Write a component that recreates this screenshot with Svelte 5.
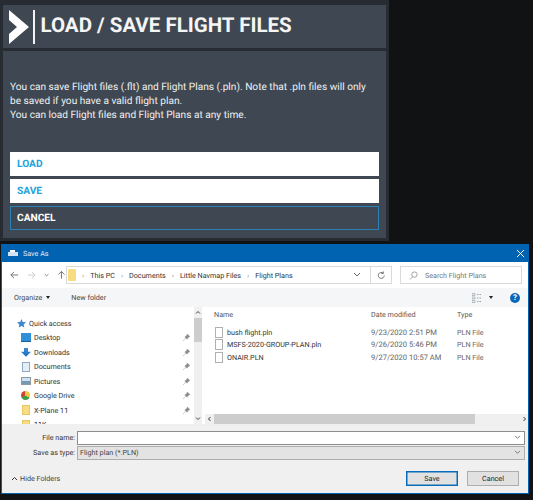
<script>
  const side = [
    { n: 'Desktop', c: 'desk' },
    { n: 'Downloads', c: 'down' },
    { n: 'Documents', c: 'docs' },
    { n: 'Pictures', c: 'pics' },
    { n: 'Google Drive', c: 'drive' },
    { n: 'X-Plane 11', c: 'folder' }
  ];
  const files = [
    { n: 'bush flight.pln', d: '9/23/2020 2:51 PM' },
    { n: 'MSFS-2020-GROUP-PLAN.pln', d: '9/26/2020 5:46 PM' },
    { n: 'ONAIR.PLN', d: '9/27/2020 10:57 AM' }
  ];
</script>

<div class="page">
  <section class="game">
    <header class="head">
      <svg class="chev" width="21" height="34" viewBox="0 0 21 34"><path d="M0 0 L20 17 L0 34 L0 24 L8 17 L0 10Z" fill="#fff" /></svg>
      <span class="rule"></span>
      <h1>LOAD / SAVE FLIGHT FILES</h1>
    </header>
    <div class="body">
      <p>You can save Flight files (.flt) and Flight Plans (.pln). Note that .pln files will only<br />be saved if you have a valid flight plan.<br />You can load Flight files and Flight Plans at any time.</p>
      <div class="btns">
        <div class="btn light">LOAD</div>
        <div class="btn light">SAVE</div>
        <div class="btn dark">CANCEL</div>
      </div>
    </div>
  </section>

  <section class="dlg">
    <div class="title">
      <svg width="10" height="8" viewBox="0 0 10 8"><path d="M0 3h10v4H0z" fill="#cfe3f5" /><path d="M2 1h5v2H2z" fill="#fff" /></svg>
      <span>Save As</span>
      <svg class="x" width="9" height="9" viewBox="0 0 9 9"><path d="M1 1l7 7M8 1l-7 7" stroke="#fff" stroke-width="1" /></svg>
    </div>
    <div class="addr">
      <div class="nav">
        <svg width="10" height="10" viewBox="0 0 10 10"><path d="M9 5H1M4.500 1.500L1 5l3.500 3.500" fill="none" stroke="#666" /></svg>
        <svg width="10" height="10" viewBox="0 0 10 10"><path d="M1 5h8M5.500 1.500L9 5 5.500 8.500" fill="none" stroke="#c9c9c9" /></svg>
        <svg width="6" height="6" viewBox="0 0 6 6"><path d="M1 2l2 2 2-2" fill="none" stroke="#777" /></svg>
        <svg width="10" height="10" viewBox="0 0 10 10"><path d="M5 9V1M1.500 4.500L5 1l3.500 3.500" fill="none" stroke="#666" /></svg>
      </div>
      <div class="path">
        <span class="fold"></span>
        <span class="crumb">›</span><span>This PC</span>
        <span class="crumb">›</span><span>Documents</span>
        <span class="crumb">›</span><span>Little Navmap Files</span>
        <span class="crumb">›</span><span>Flight Plans</span>
        <svg class="pdrop" width="8" height="6" viewBox="0 0 8 6"><path d="M1 1l3 3 3-3" fill="none" stroke="#666" /></svg>
        <span class="psep"></span>
        <svg class="refresh" width="9" height="9" viewBox="0 0 10 10"><path d="M8 5a3.300 3.300 0 1 1-1.200-2.600M7 .5v2.200H4.800" fill="none" stroke="#666" /></svg>
      </div>
      <div class="search">
        <svg width="9" height="9" viewBox="0 0 10 10"><circle cx="6" cy="4" r="3" fill="none" stroke="#999" /><path d="M4 6.500L1 9.500" stroke="#999" /></svg>
        <span>Search Flight Plans</span>
      </div>
    </div>
    <div class="tools">
      <span>Organize</span><span class="tri"></span>
      <span class="newf">New folder</span>
      <svg class="view" width="11" height="10" viewBox="0 0 11 10"><path d="M0 .5h3v2H0zM0 4h3v2H0zM0 7.500h3v2H0z" fill="none" stroke="#9aa3ad" stroke-width=".7" /><path d="M5 1.500h5M5 5h5M5 8.500h5" stroke="#9aa3ad" stroke-dasharray="1.500 1" /></svg>
      <span class="tri vt"></span>
      <span class="help">?</span>
    </div>
    <div class="main">
      <nav class="tree">
        <div class="list">
          <div class="row qa">
            <svg width="9" height="9" viewBox="0 0 10 10"><path d="M5 0l1.500 3.300 3.500.4-2.600 2.300.7 3.500L5 7.700 1.900 9.500l.7-3.500L0 3.700l3.500-.4z" fill="#3c8ad0" /></svg>
            <span>Quick access</span>
          </div>
          {#each side as s}
            <div class="row">
              <span class="ic {s.c}"></span>
              <span class="lbl">{s.n}</span>
              <svg class="pin" width="7" height="7" viewBox="0 0 8 8"><path d="M5 0l3 3-1.500.5L5 5.500 4.500 6 2 3.500 2.500 3l2-1.500zM3 5L0 8" fill="#8b8b8b" stroke="#8b8b8b" stroke-width=".5" /></svg>
            </div>
          {/each}
          <div class="row"><span class="ic folder"></span><span class="lbl">11K</span></div>
        </div>
        <div class="vbar">
          <svg width="6" height="5" viewBox="0 0 6 5"><path d="M1 3.500L3 1.500l2 2" fill="none" stroke="#444" /></svg>
          <span class="thumb"></span>
          <svg class="vdown" width="6" height="5" viewBox="0 0 6 5"><path d="M1 1.500L3 3.500l2-2" fill="none" stroke="#444" /></svg>
        </div>
      </nav>
      <div class="files">
        <div class="cols">
          <span class="c1">Name</span><span class="c2">Date modified</span><span class="c3">Type</span>
        </div>
        <div class="rows">
          {#each files as f}
            <div class="frow">
              <span class="c1 fname"><span class="doc"></span>{f.n}</span>
              <span class="c2 date">{f.d}</span>
              <span class="c3">PLN File</span>
            </div>
          {/each}
        </div>
        <div class="hbar">
          <svg width="5" height="6" viewBox="0 0 5 6"><path d="M3.500 1L1.500 3l2 2" fill="none" stroke="#333" /></svg>
          <span class="hthumb"></span>
          <svg width="5" height="6" viewBox="0 0 5 6"><path d="M1.500 1l2 2-2 2" fill="none" stroke="#333" /></svg>
        </div>
      </div>
    </div>
    <div class="foot">
      <div class="field"><label for="fn">File name:</label><div id="fn" class="inp">
        <svg width="7" height="5" viewBox="0 0 8 6"><path d="M1 1l3 3 3-3" fill="none" stroke="#666" /></svg></div></div>
      <div class="field"><label for="ft">Save as type:</label><div id="ft" class="inp sel"><span>Flight plan (*.PLN)</span>
        <svg width="7" height="5" viewBox="0 0 8 6"><path d="M1 1l3 3 3-3" fill="none" stroke="#666" /></svg></div></div>
      <div class="actions">
        <div class="hide">
          <svg width="7" height="5" viewBox="0 0 7 5"><path d="M1 4l2.500-2.500L6 4" fill="none" stroke="#333" /></svg>
          <span>Hide Folders</span>
        </div>
        <div class="wbtn def">Save</div>
        <div class="wbtn">Cancel</div>
      </div>
    </div>
  </section>
</div>

<style>
  :global(body) { margin: 0; background: #111214; text-rendering: geometricPrecision; }
  .page { width: 533px; height: 500px; overflow: hidden; background: #111214; box-sizing: border-box; }
  .game { width: 389px; height: 241px; background: #262c32; padding: 5px 3px 3px 3px; box-sizing: border-box; display: flex; flex-direction: column; gap: 3px; font-family: Roboto, sans-serif; color: #fff; }
  .head { height: 43px; background: #3f4852; display: flex; align-items: center; flex: none; padding-left: 6px; }
  .chev { flex: none; }
  .rule { width: 1.500px; height: 34px; background: #f2f2f2; margin-left: 3px; }
  h1 { margin: 0 0 0 6px; font-size: 20.500px; font-weight: 700; line-height: 1; color: #f5f5f5; white-space: nowrap; }
  .body { flex: 1; background: #3f4852; padding: 0 7px; display: flex; flex-direction: column; }
  p { margin: 30px 0 0 0; font-size: 10.150px; line-height: 14px; color: #f0f0f0; height: 71px; white-space: nowrap; }
  .btns { display: flex; flex-direction: column; gap: 3px; }
  .btn { height: 24px; font-size: 10.200px; font-weight: 700; line-height: 24px; padding: 1px 0 0 7px; box-sizing: border-box; }
  .light { background: #fff; color: #22a3dc; }
  .dark { background: #3f4852; color: #fff; border: 1px solid #2a82b4; line-height: 22px; padding-left: 6px; }

  .dlg { width: 528px; height: 250px; margin: 3px 0 0 1px; background: #fff; display: flex; flex-direction: column; font-family: Roboto, sans-serif; font-size: 7.200px; color: #444; box-sizing: border-box; border: 1px solid #0063b1; border-top: 0; white-space: nowrap; }
  .title { height: 18px; background: #0063b1; color: #e4eef7; display: flex; align-items: center; gap: 5px; padding-left: 6px; flex: none; }
  .x { margin-left: auto; margin-right: 3px; }
  .addr { height: 26px; flex: none; display: flex; align-items: center; }
  .nav { width: 64px; display: flex; align-items: center; gap: 8px; padding-left: 8px; box-sizing: border-box; flex: none; }
  .path { width: 326px; height: 18px; border: 1px solid #d9d9d9; display: flex; align-items: center; box-sizing: border-box; gap: 6px; padding-left: 1px; color: #333; flex: none; }
  .fold { width: 8px; height: 12px; background: #f7dc82; border-radius: 1px; flex: none; }
  .crumb { color: #888; }
  .pdrop { margin-left: auto; }
  .psep { width: 1px; height: 16px; background: #d9d9d9; margin-left: 3px; }
  .refresh { margin: 0 5px 0 0; }
  .search { width: 122px; height: 18px; margin-left: 8px; border: 1px solid #d9d9d9; display: flex; align-items: center; box-sizing: border-box; padding-left: 8px; gap: 7px; color: #777; flex: none; }
  .tools { height: 19px; flex: none; background: #f5f6f7; display: flex; align-items: center; padding-left: 12px; color: #444; }
  .tri { width: 0; height: 0; border: 2.500px solid transparent; border-top: 3px solid #222; border-bottom: 0; margin-left: 4px; }
  .newf { margin-left: 21px; }
  .view { margin-left: auto; }
  .vt { margin-left: 6px; }
  .help { width: 10px; height: 10px; border-radius: 50%; background: #0b66b8; color: #fff; font-weight: 700; font-size: 8px; line-height: 10px; text-align: center; margin: 0 8px 0 17px; }
  .main { flex: 1; min-height: 0; display: flex; }
  .tree { width: 203px; flex: none; display: flex; overflow: hidden; }
  .list { width: 191px; flex: none; padding-top: 9px; box-sizing: border-box; height: 117px; overflow: hidden; }
  .row { height: 14.500px; display: flex; align-items: center; padding-left: 19px; color: #333; }
  .qa { padding-left: 15px; gap: 3px; }
  .ic { width: 10px; height: 8px; flex: none; margin-right: 3px; }
  .lbl { flex: 1; }
  .pin { margin-right: 3px; }
  .desk { background: #2f8fd8; border-bottom: 1px solid #1b5f9c; }
  .down { background: linear-gradient(#3c8ad0, #1d6fc0); clip-path: polygon(30% 0, 70% 0, 70% 45%, 100% 45%, 50% 100%, 0 45%, 30% 45%); height: 9px; }
  .docs { background: #e6eef5; border: 1px solid #8eaac4; box-sizing: border-box; height: 10px; width: 8px; margin: 0 4px 0 1px; }
  .pics { background: linear-gradient(#cfe2f3 50%, #7796b0 50%); border: 1px solid #8e9aa5; box-sizing: border-box; }
  .drive { background: conic-gradient(#f2c437 0 33%, #3f9a4a 33% 66%, #c9473a 66%); border-radius: 50%; height: 9px; width: 9px; margin-right: 4px; }
  .folder { background: #f7dc82; border: 1px solid #e6c768; box-sizing: border-box; height: 10px; width: 8px; margin: 0 4px 0 1px; }
  .vbar { width: 8px; flex: none; background: #f0f0f0; display: flex; flex-direction: column; align-items: center; padding-top: 3px; box-sizing: border-box; margin-left: 1px; height: 117px; }
  .thumb { width: 8px; height: 24px; background: #cdcdcd; margin-top: 3px; }
  .vdown { margin-top: auto; margin-bottom: 3px; }
  .files { flex: 1; min-width: 0; display: flex; flex-direction: column; }
  .cols { height: 15px; flex: none; display: flex; align-items: center; color: #555; }
  .c1 { width: 164px; padding-left: 9px; box-sizing: border-box; flex: none; }
  .c2 { width: 86px; padding-left: 2px; box-sizing: border-box; flex: none; }
  .date { font-size: 7.600px; }
  .c3 { flex: 1; padding-left: 2px; }
  .rows { flex: 1; padding-top: 4px; color: #666; }
  .frow { height: 12.500px; display: flex; align-items: center; }
  .fname { display: flex; align-items: center; gap: 4px; color: #333; padding-left: 10px; }
  .doc { width: 6px; height: 9px; border: 1px solid #b0b0b0; background: #fff; flex: none; }
  .hbar { height: 10px; flex: none; background: #f0f0f0; display: flex; align-items: center; padding: 0 1px 0 2px; gap: 2px; }
  .hthumb { flex: 1; height: 10px; background: #cdcdcd; margin-right: 45px; }
  .foot { height: 69px; flex: none; background: #f0f0f0; display: flex; flex-direction: column; padding-top: 6px; box-sizing: border-box; color: #333; }
  .field { display: flex; align-items: center; height: 15px; }
  label { width: 75px; text-align: right; flex: none; padding-right: 2px; box-sizing: border-box; }
  .inp { flex: 1; height: 14px; margin-right: 3px; background: #fff; border: 1px solid #8d8d8d; box-sizing: border-box; display: flex; align-items: center; justify-content: flex-end; padding: 0 3px; }
  .sel { background: #e3e3e3; border-color: #adadad; justify-content: space-between; color: #444; padding-left: 2px; }
  .actions { display: flex; align-items: center; margin-top: 11px; }
  .hide { display: flex; align-items: center; gap: 2px; padding-left: 9px; margin-right: auto; color: #444; }
  .wbtn { width: 52px; height: 15px; background: #e1e1e1; border: 1px solid #adadad; box-sizing: border-box; text-align: center; line-height: 13px; color: #222; margin-right: 9px; }
  .def { border: 1px solid #0a6cb8; box-shadow: inset 0 0 0 .5px #0a6cb8; }
</style>
